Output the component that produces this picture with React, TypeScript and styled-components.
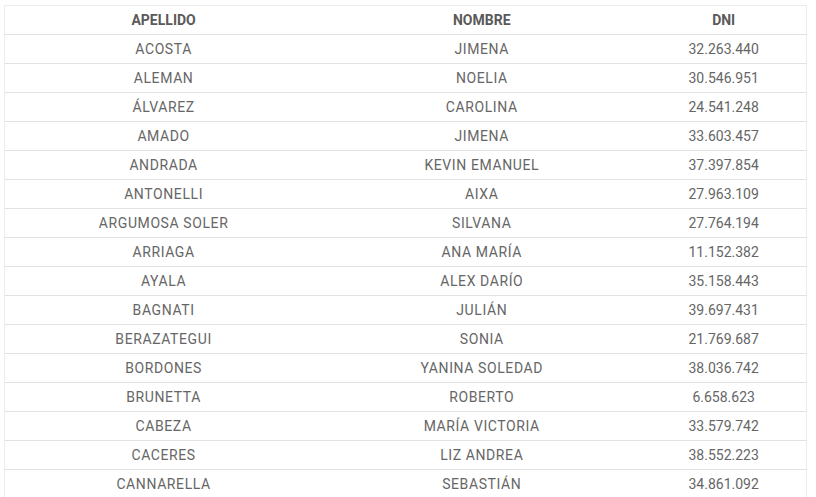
import React from "react";
import styled, { createGlobalStyle } from "styled-components";

const GlobalStyle = createGlobalStyle`
  html, body {
    margin: 0;
    padding: 0;
    background: #ffffff;
    font-family: Roboto, "Liberation Sans", sans-serif;
  }
`;

const Page = styled.div`
  padding: 5px 9px 0 4px;
`;

const Table = styled.table`
  width: 803px;
  border-collapse: collapse;
  border: 1px solid #ececec;
  font-size: 14px;
  color: #666666;
`;

const HeadCell = styled.th<{ $w: number }>`
  width: ${(p) => p.$w}px;
  height: 28px;
  padding: 0;
  text-align: center;
  font-weight: 700;
  color: #5a5a5a;
  border-bottom: 1px solid #e2e2e2;
`;

const Cell = styled.td<{ $num?: boolean }>`
  height: 28px;
  padding: 0;
  text-align: center;
  letter-spacing: ${(p) => (p.$num ? "0" : "0.6px")};
  border-bottom: 1px solid #e2e2e2;
`;

const rows: [string, string, string][] = [
  ["ACOSTA", "JIMENA", "32.263.440"],
  ["ALEMAN", "NOELIA", "30.546.951"],
  ["ÁLVAREZ", "CAROLINA", "24.541.248"],
  ["AMADO", "JIMENA", "33.603.457"],
  ["ANDRADA", "KEVIN EMANUEL", "37.397.854"],
  ["ANTONELLI", "AIXA", "27.963.109"],
  ["ARGUMOSA SOLER", "SILVANA", "27.764.194"],
  ["ARRIAGA", "ANA MARÍA", "11.152.382"],
  ["AYALA", "ALEX DARÍO", "35.158.443"],
  ["BAGNATI", "JULIÁN", "39.697.431"],
  ["BERAZATEGUI", "SONIA", "21.769.687"],
  ["BORDONES", "YANINA SOLEDAD", "38.036.742"],
  ["BRUNETTA", "ROBERTO", "6.658.623"],
  ["CABEZA", "MARÍA VICTORIA", "33.579.742"],
  ["CACERES", "LIZ ANDREA", "38.552.223"],
  ["CANNARELLA", "SEBASTIÁN", "34.861.092"],
];

const App = () => {
  return (
    <Page>
      <GlobalStyle />
      <Table>
        <thead>
          <tr>
            <HeadCell $w={318}>APELLIDO</HeadCell>
            <HeadCell $w={320}>NOMBRE</HeadCell>
            <HeadCell $w={165}>DNI</HeadCell>
          </tr>
        </thead>
        <tbody>
          {rows.map((r) => (
            <tr key={r[2]}>
              <Cell>{r[0]}</Cell>
              <Cell>{r[1]}</Cell>
              <Cell $num>{r[2]}</Cell>
            </tr>
          ))}
        </tbody>
      </Table>
    </Page>
  );
};

export default App;
